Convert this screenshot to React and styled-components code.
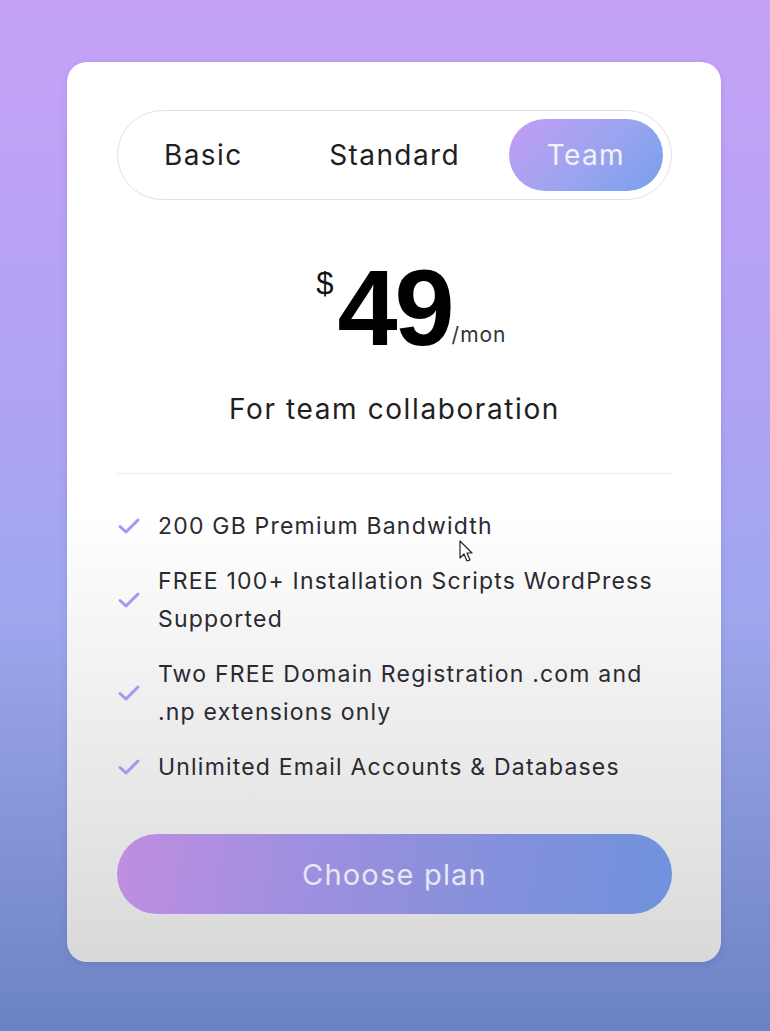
import React from "react";
import styled, { createGlobalStyle } from "styled-components";

const Global = createGlobalStyle`
  html, body { margin: 0; padding: 0; }
  body {
    min-height: 1031px;
    background: linear-gradient(180deg, #c5a2f8 0%, #b2a3f4 35%, #9ea6ee 60%, #6b83c3 100%);
    font-family: Inter, "Noto Sans", sans-serif;
  }
`;

const Page = styled.div`
  height: 1031px;
  padding: 62px 0 0 67px;
  box-sizing: border-box;
`;

const Card = styled.div`
  position: relative;
  width: 654px;
  height: 900px;
  box-sizing: border-box;
  padding: 48px 49px 0 50px;
  border-radius: 20px;
  background: linear-gradient(180deg, #ffffff 0%, #ffffff 50%, #ececec 75%, #d9d9d9 100%);
  box-shadow: 0 2px 6px rgba(60, 60, 120, 0.15);
  display: flex;
  flex-direction: column;
`;

const Tabs = styled.div`
  height: 90px;
  box-sizing: border-box;
  border: 1px solid #e2e2e2;
  border-radius: 45px;
  padding: 8px;
  display: flex;
  justify-content: space-between;
`;

const Tab = styled.div`
  padding: 0 38px;
  border-radius: 37px;
  display: flex;
  align-items: center;
  font-size: 28px;
  letter-spacing: 1.4px;
  color: ${(p) => (p.$active ? "#f4f1fb" : "#1e1e24")};
  background: ${(p) => (p.$active ? "linear-gradient(135deg, #c49cf4 0%, #9ea4f0 50%, #78a0ec 100%)" : "transparent")};
`;

const PriceRow = styled.div`
  margin-top: 58px;
  display: grid;
  grid-template-columns: 1fr auto 1fr;
  align-items: start;
`;

const Currency = styled.span`
  justify-self: end;
  margin-right: 4px;
  margin-top: 8px;
  font-family: "Liberation Sans", Arial, sans-serif;
  font-size: 31px;
  color: #111;
`;

const Amount = styled.span`
  font-family: "Liberation Sans", Arial, sans-serif;
  font-weight: 700;
  font-size: 108px;
  line-height: 100px;
  letter-spacing: -3px;
  color: #000;
`;

const Period = styled.span`
  justify-self: start;
  align-self: end;
  margin-bottom: 11px;
  font-size: 21px;
  letter-spacing: 1px;
  color: #333;
`;

const Subtitle = styled.div`
  margin-top: 34px;
  text-align: center;
  font-size: 28px;
  letter-spacing: 1.6px;
  color: #1e1e24;
`;

const Divider = styled.hr`
  margin: 47px 0 0 0;
  border: 0;
  height: 1px;
  background: #ececec;
`;

const Features = styled.ul`
  list-style: none;
  margin: 33px 0 0 0;
  padding: 0;
  display: flex;
  flex-direction: column;
  gap: 17px;
`;

const Feature = styled.li`
  display: flex;
  align-items: center;
  gap: 17px;
  font-size: 23px;
  letter-spacing: 1.2px;
  line-height: 38px;
  color: #2a2a30;
`;

const Check = styled.svg`
  flex: none;
  width: 24px;
  height: 24px;
`;

const FeatureText = styled.span`
  flex: 1;
`;

const Button = styled.button`
  margin-top: 48px;
  height: 80px;
  border: 0;
  border-radius: 40px;
  font-family: inherit;
  font-size: 29px;
  letter-spacing: 1.2px;
  color: #e8e6f2;
  background: linear-gradient(100deg, #c08ee0 0%, #a28fe0 30%, #8a90dc 60%, #6f92dc 100%);
  cursor: pointer;
`;

const Cursor = styled.svg`
  position: absolute;
  left: 392px;
  top: 478px;
  width: 16px;
  height: 24px;
`;

const CheckIcon = () => (
  <Check viewBox="0 0 24 24" fill="none">
    <path d="M3 12.5 L9 18 L21 6" stroke="#a597ee" strokeWidth="3" strokeLinecap="round" strokeLinejoin="round" />
  </Check>
);

const features = [
  "200 GB Premium Bandwidth",
  "FREE 100+ Installation Scripts WordPress Supported",
  "Two FREE Domain Registration .com and .np extensions only",
  "Unlimited Email Accounts & Databases",
];

export default function App() {
  return (
    <>
      <Global />
      <Page>
        <Card>
          <Tabs>
            <Tab>Basic</Tab>
            <Tab>Standard</Tab>
            <Tab $active>Team</Tab>
          </Tabs>
          <PriceRow>
            <Currency>$</Currency>
            <Amount>49</Amount>
            <Period>/mon</Period>
          </PriceRow>
          <Subtitle>For team collaboration</Subtitle>
          <Divider />
          <Features>
            {features.map((f) => (
              <Feature key={f}>
                <CheckIcon />
                <FeatureText>{f}</FeatureText>
              </Feature>
            ))}
          </Features>
          <Button>Choose plan</Button>
          <Cursor viewBox="0 0 16 24">
            <path d="M1 1 L1 18 L5 14 L8 21 L11 20 L8 13 L13 13 Z" fill="#fff" stroke="#222" strokeWidth="1.2" strokeLinejoin="round" />
          </Cursor>
        </Card>
      </Page>
    </>
  );
}
